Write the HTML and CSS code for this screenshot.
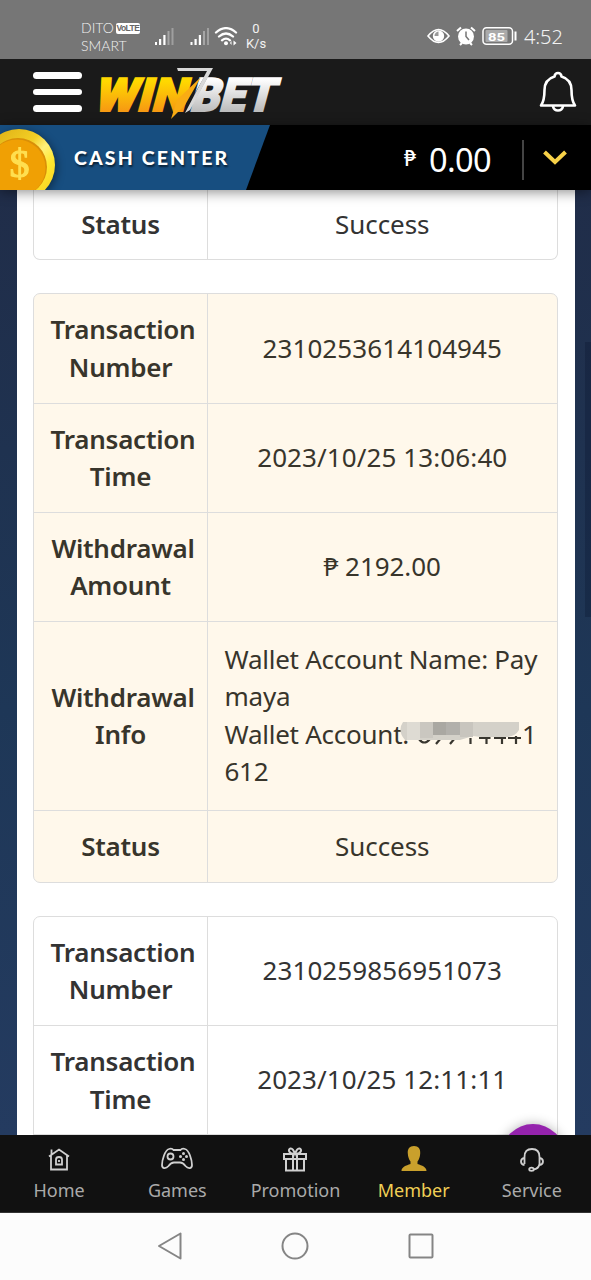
FILE: index.html
```html
<!DOCTYPE html>
<html lang="en">
<head>
<meta charset="utf-8">
<title>Winbet - Transactions</title>
<link rel="stylesheet" href="styles.css">
</head>
<body>
<div class="screen">
  <div class="status">
    <div class="carriers">
      <div class="carrier">DITO <span class="volte">VoLTE</span></div>
      <div class="carrier">SMART</div>
    </div>
    <svg class="signals" width="86" height="22" viewBox="0 0 86 22" fill="#fff">
      <g><rect x="1" y="15" width="2" height="3"/><rect x="5" y="12" width="2.2" height="6"/><rect x="9.300" y="8" width="2.200" height="10"/><rect x="13.500" y="4" width="2" height="14" opacity=".35"/><rect x="17.500" y="1" width="2" height="17" opacity=".3"/></g>
      <g transform="translate(35.500 0)"><rect x="1" y="15" width="2" height="3"/><rect x="5" y="12" width="2.200" height="6"/><rect x="9.300" y="8" width="2.200" height="10"/><rect x="13.500" y="4" width="2" height="14" opacity=".35"/><rect x="17.500" y="1" width="2" height="17" opacity=".3"/></g>
      <g fill="none" stroke="#fff" stroke-width="2.300" stroke-linecap="round"><path d="M62 5.500Q72-3.200 82 5.500M65 9.500Q72 3.500 79 9.500M68 13.300Q72 10 76 13.300"/></g>
      <circle cx="72" cy="16.300" r="2"/><path d="M79.500 13.500l3 2.500-3 2.500zM77.500 14l-1.500 2 1.500 2z"/>
    </svg>
    <div class="speed"><div>0</div><div>K/s</div></div>
    <svg class="status-icons" width="92" height="22" viewBox="0 0 92 22">
      <path d="M1 11Q11.500-2 22 11Q11.500 24 1 11Z" fill="none" stroke="#fff" stroke-width="1.600"/>
      <circle cx="11.500" cy="11" r="5.700" fill="#fff"/><path d="M11.500 6.500v4.500H7.500a4.200 4.200 0 0 1 4-4.500z" fill="#999"/>
      <circle cx="39" cy="11.500" r="8" fill="#fff"/><path d="M39 6.500v5l3 3.500" fill="none" stroke="#767676" stroke-width="1.500"/>
      <path d="M30 6l4-3.500M48 6l-4-3.500M33 20l2-2M45 20l-2-2" stroke="#fff" stroke-width="2"/>
      <rect x="56" y="2.700" width="29.500" height="16.500" rx="3.500" fill="none" stroke="#fff" stroke-width="1.500"/>
      <rect x="58.500" y="5" width="22" height="12" rx="1" fill="#aaa"/>
      <text x="61" y="15.500" class="battery-text" textLength="17" lengthAdjust="spacingAndGlyphs">85</text>
      <rect x="87.500" y="6.500" width="2" height="9" fill="#fff"/>
    </svg>
    <div class="clock">4:52</div>
  </div>

  <header class="header">
    <div class="burger"><i></i><i></i><i></i></div>
    <svg class="logo" width="196" height="60" viewBox="0 0 196 60">
      <defs>
        <linearGradient id="gold" x1="0" y1="0" x2="0" y2="1"><stop offset=".25" stop-color="#ffd800"/><stop offset=".8" stop-color="#f79a12"/></linearGradient>
        <linearGradient id="silver" x1="0" y1="0" x2="0" y2="1"><stop offset=".2" stop-color="#fff"/><stop offset=".8" stop-color="#bdbdbd"/></linearGradient>
      </defs>
      <g transform="translate(3 46.500) skewX(-15)">
        <text class="logo-text logo-gold" x="-4" y="0" textLength="92" lengthAdjust="spacingAndGlyphs">WIN</text>
        <text class="logo-text logo-silver" x="92" y="0" textLength="84" lengthAdjust="spacingAndGlyphs">BET</text>
      </g>
      <path d="M107 13L91 41L77 55L83 36Z" fill="#f9ac14"/>
      <path d="M112 13L91 50" stroke="#1a1a1a" stroke-width="3"/>
      <path d="M83 4H119L96 46L91 49L113 7H84Z" fill="#d8d8d8"/>
    </svg>
    <svg class="bell" width="38" height="42" viewBox="0 0 38 42" fill="none" stroke="#fff" stroke-width="2.600" stroke-linejoin="round">
      <path d="M15.500 5.500Q16 2 19 2Q22 2 22.500 5.500C29 7.500 32.500 12.500 32.500 19C32.500 27 33.500 31 36 34.500H2C4.500 31 5.500 27 5.500 19C5.500 12.500 9 7.500 15.500 5.500ZM14 35.500Q15 39.500 19 39.500Q23 39.500 24 35.500"/>
    </svg>
  </header>

  <div class="cash">
    <div class="cash-tab">
      <svg class="coin" width="56" height="65" viewBox="0 0 56 65">
        <defs><linearGradient id="rim" x1="0" y1="0" x2="1" y2="1"><stop offset="0" stop-color="#d9a812"/><stop offset=".42" stop-color="#f3cf25"/><stop offset=".55" stop-color="#fff17a"/><stop offset=".7" stop-color="#ffe72e"/><stop offset="1" stop-color="#f7c91d"/></linearGradient></defs>
        <ellipse cx="19" cy="40" rx="36" ry="36" fill="url(#rim)"/>
        <circle cx="18" cy="42" r="29" fill="#d98f08"/><circle cx="17" cy="43" r="28.500" fill="#f0a004"/>
        <text class="coin-sign" x="19.500" y="52" text-anchor="middle">$</text>
      </svg>
      <span class="cash-label">CASH CENTER</span>
    </div>
    <div class="balance">
      <span class="peso">₱</span><span class="amount">0.00</span><i class="sep"></i>
      <svg width="26" height="18" viewBox="0 0 26 18" fill="none" stroke="#f7d148" stroke-width="4"><path d="M2.500 3L13 13L23.500 3"/></svg>
    </div>
  </div>

  <main class="content">
    <div class="sheet">
      <section class="card card-first">
        <div class="row row-status"><div class="key">Status</div><div class="val">Success</div></div>
      </section>
      <section class="card card-cream">
        <div class="row"><div class="key"><span class="wide">Transaction</span><span>Number</span></div><div class="val val-number">2310253614104945</div></div>
        <div class="row"><div class="key"><span class="wide">Transaction</span><span>Time</span></div><div class="val val-number">2023/10/25 13:06:40</div></div>
        <div class="row"><div class="key"><span class="wide">Withdrawal</span><span>Amount</span></div><div class="val">₱ 2192.00</div></div>
        <div class="row row-info"><div class="key"><span class="wide">Withdrawal</span><span>Info</span></div>
          <div class="val val-info">
            <div>Wallet Account Name: Pay</div><div>maya</div>
            <div class="masked"><span>Wallet Account:</span>
              <svg class="mask" width="126" height="28" viewBox="398 719 126 28">
                <path d="M419 739Q424 746 430 739M441 738L436 744M455 738L450 744M470.500 738V744M479 738H490.500M486.500 736V744M494 738H506M502 736V744M508 738H521M516 736V744" fill="none" stroke="#38362f" stroke-width="2.200"/>
                <path d="M403 722H519V730Q515 737 505 737H481L473 736L460 740H405Q397 731 403 722Z" fill="#d4d1c9"/>
                <path d="M407 722h13v18h-13z" fill="#dedbd3"/><path d="M420 722h13v16h-13z" fill="#cac7c0"/><path d="M433 722h13v13h-13z" fill="#aaa8a2"/><path d="M446 722h14v13h-14z" fill="#b2b0ab"/><path d="M460 722h13v15h-13z" fill="#c8c5be"/>
              </svg><span>1</span></div>
            <div>612</div>
          </div>
        </div>
        <div class="row row-status"><div class="key">Status</div><div class="val">Success</div></div>
      </section>
      <section class="card">
        <div class="row"><div class="key"><span class="wide">Transaction</span><span>Number</span></div><div class="val val-number">2310259856951073</div></div>
        <div class="row"><div class="key"><span class="wide">Transaction</span><span>Time</span></div><div class="val val-number">2023/10/25 12:11:11</div></div>
        <div class="row"></div>
      </section>
    </div>
    <i class="side-shade"></i>
    <i class="bubble"></i>
  </main>

  <nav class="tabs">
    <div class="tab">
      <svg width="24" height="26" viewBox="0 0 24 26" fill="none" stroke="#d0d0d0" stroke-width="1.800"><path d="M2 10.500L12 3.500L22 10.500M4 9.500V23.500H20V9.500M4.500 8V3.500M9 18.500V13.500Q9 11 12 11Q15 11 15 13.500V18.500ZM12 14V16"/></svg>
      <span>Home</span>
    </div>
    <div class="tab">
      <svg width="32" height="26" viewBox="0 0 32 26" fill="none" stroke="#d0d0d0" stroke-width="1.800"><path d="M8 3Q11 2 12.500 4H19.500Q21 2 24 3C28 4 31 14 31 19C31 23 27 23 24.500 20Q22 16.500 19 16.500H13Q10 16.500 7.500 20C5 23 1 23 1 19C1 14 4 4 8 3Z"/><circle cx="9.500" cy="10.500" r="3"/><g fill="#d0d0d0" stroke="none"><circle cx="22.500" cy="7.500" r="1.500"/><circle cx="22.500" cy="13.500" r="1.500"/><circle cx="19.500" cy="10.500" r="1.500"/><circle cx="25.500" cy="10.500" r="1.500"/></g></svg>
      <span>Games</span>
    </div>
    <div class="tab">
      <svg width="24" height="26" viewBox="0 0 24 26" fill="none" stroke="#d0d0d0" stroke-width="2"><path d="M1 8H23V13H1ZM3 13V24.500H21V13M10 8V24.500M14 8V24.500M11 8C5 7 5 3 7.500 2.500C10 2 11 5 12 8C13 5 14 2 16.500 2.500C19 3 19 7 13 8"/></svg>
      <span>Promotion</span>
    </div>
    <div class="tab tab-active">
      <svg width="26" height="26" viewBox="0 0 26 26" fill="#c9a02c"><path d="M13 0C17.500 0 19.700 3 19.200 7.500C19 11 18 13.500 16.500 15.500V18C21 19.500 25.500 21 25.500 25H.5C.5 21 5 19.500 9.500 18V15.500C8 13.500 7 11 6.800 7.500C6.300 3 8.500 0 13 0Z"/></svg>
      <span>Member</span>
    </div>
    <div class="tab">
      <svg width="24" height="26" viewBox="0 0 24 26" fill="none" stroke="#d0d0d0" stroke-width="1.800"><path d="M4.500 18V11Q4.500 3 12 3Q19.500 3 19.500 11V18Q18.500 23 13.500 23.500M4.500 12Q1 12.500 1 15.500Q1 18.500 4.500 19M19.500 12Q23 12.500 23 15.500Q23 18.500 19.500 19"/><ellipse cx="11.500" cy="23.300" rx="2.300" ry="1.600"/></svg>
      <span>Service</span>
    </div>
  </nav>

  <div class="system-nav">
    <svg width="26" height="28" viewBox="0 0 26 28"><path d="M2 14L23.500 1.500V26.500Z"/></svg>
    <svg width="28" height="28" viewBox="0 0 28 28"><circle cx="14" cy="14" r="12.500"/></svg>
    <svg width="26" height="28" viewBox="0 0 26 28"><rect x="1.500" y="2.500" width="23" height="23" rx="1"/></svg>
  </div>
</div>
</body>
</html>
```
FILE: styles.css
```css
* { box-sizing: border-box; }
body { margin: 0; font-family: "Noto Sans", sans-serif; color: #333; }
svg { display: block; flex: none; }
.screen { width: 591px; height: 1280px; display: flex; flex-direction: column; overflow: hidden; }

.status { height: 59px; flex: none; background: #767676; color: #f2f2f2; display: flex; align-items: flex-start; padding: 19px 0 0 81px; }
.carriers { width: 73px; font: 300 14px/18px Lato, sans-serif; }
.carrier { display: flex; align-items: center; gap: 2px; height: 18px; white-space: nowrap; }
.volte { background: #fff; color: #666; font: 700 8.500px/11px "Liberation Sans", sans-serif; border-radius: 2px; width: 24px; text-align: center; letter-spacing: -.6px; }
.signals { margin-top: 8px; }
.speed { width: 30px; text-align: center; font: 13px/15px Roboto, sans-serif; margin: 2px 0 0 1px; }
.status-icons { margin: 6px 0 0 156px; }
.battery-text { font: 700 11px Roboto, sans-serif; fill: #fff; }
.clock { font: 300 20px/24px "Noto Sans", sans-serif; margin: 6px 0 0 5px; letter-spacing: -.1px; }

.header { height: 66px; flex: none; background: #1a1a1a; display: flex; align-items: flex-start; padding-left: 33px; }
.burger { display: flex; flex-direction: column; gap: 10px; margin-top: 13px; width: 49px; }
.burger i { height: 6.500px; border-radius: 4px; background: #fff; }
.logo { margin: 5px 0 0 12px; }
.logo-text { font: 900 46px Roboto, sans-serif; stroke-width: 2px; }
.logo-gold { fill: url(#gold); stroke: url(#gold); }
.logo-silver { fill: url(#silver); stroke: url(#silver); }
.bell { margin: 12px 0 0 249px; }

.cash { height: 65px; flex: none; background: #000; display: flex; justify-content: space-between; position: relative; z-index: 2; box-shadow: 0 2px 12px rgba(0,0,0,.45); }
.cash-tab { width: 270px; background: #174e80; clip-path: polygon(0 0, 100% 0, 246px 100%, 0 100%); display: flex; }
.coin { filter: drop-shadow(2px 2px 4px rgba(0,0,0,.4)); }
.coin-sign { font: 40px "Liberation Serif", serif; fill: #ffdf50; stroke: #ffdf50; stroke-width: 1.200px; }
.cash-label { color: #fff; font: 900 19.500px/65px Lato, sans-serif; letter-spacing: 2.150px; margin-left: 18px; text-shadow: 1px 2px 2px rgba(0,0,0,.6); }
.balance { display: flex; align-items: center; color: #fff; padding-right: 23px; }
.peso { font: 500 21px/30px "Noto Sans", sans-serif; margin: 0 13px 0 0; }
.amount { font-size: 32.500px; line-height: 40px; letter-spacing: -.6px; margin-top: 4px; }
.sep { width: 2px; height: 40px; background: #444; margin: 4px 18px 0 31px; }

.content { height: 945px; flex: none; position: relative; overflow: hidden; padding: 0 16.500px; background: linear-gradient(#202d49, #1e3757 55%, #243b60); }
.sheet { background: #fff; height: 945px; padding: 0 17px 0 16.500px; display: flex; flex-direction: column; gap: 33px; }
.card { flex: none; border: 1.500px solid #ddd; border-radius: 7px; overflow: hidden; }
.card-first { border-top: 0; border-radius: 0 0 7px 7px; }
.card-cream { background: #fff8eb; color: #38352b; }
.row { display: flex; height: 109px; border-top: 1.500px solid #ddd; }
.row:first-child { border-top: 0; height: 108.500px; }
.row-info { height: 189.500px; }
.row-status { height: 71.500px; }
.card-first .row-status { height: 69px; }
.key { width: 174px; border-right: 1.500px solid #ddd; display: flex; flex-direction: column; align-items: center; justify-content: center; font-weight: 600; font-size: 26px; line-height: 37.300px; letter-spacing: -.25px; padding-top: 1px; }
.wide { padding-left: 5px; }
.val { flex: 1; display: flex; align-items: center; justify-content: center; font-size: 26px; line-height: 37.300px; letter-spacing: -.05px; white-space: nowrap; }
.val-number { letter-spacing: .1px; }
.val-info { flex-direction: column; align-items: flex-start; padding-left: 16.500px; letter-spacing: -.25px; }
.masked { display: flex; position: relative; width: 312px; justify-content: space-between; }
.mask { position: absolute; left: 173.500px; top: 3px; }
.side-shade { position: absolute; right: 0; top: 152px; width: 6px; height: 275px; background: rgba(10,20,45,.3); }
.bubble { position: absolute; left: 501px; top: 934px; width: 64px; height: 64px; border-radius: 50%; background: #9523ad; box-shadow: 0 0 12px rgba(0,0,0,.3); }

.tabs { height: 78px; flex: none; background: #111; display: grid; grid-template-columns: repeat(5, 1fr); color: #aaa; padding-top: 11px; border-bottom: 1px solid #333; }
.tab { display: flex; flex-direction: column; align-items: center; font-size: 18px; line-height: 26px; gap: 5px; }
.tab-active { color: #f0cf55; }
.system-nav { height: 67px; flex: none; background: #fcfcfc; display: flex; justify-content: center; padding: 19px 1px 0 0; gap: 98.500px; }
.system-nav svg { fill: none; stroke: #858585; stroke-width: 2px; stroke-linejoin: round; }
```
